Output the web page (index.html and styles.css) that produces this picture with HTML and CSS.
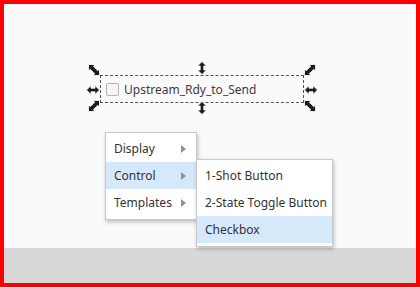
FILE: index.html
```html
<!DOCTYPE html>
<html lang="en">
<head>
    <meta charset="UTF-8">
    <title>Designer</title>
    <link rel="stylesheet" href="styles.css">
</head>
<body>
    <div class="frame">
        <div class="canvas">
            <!-- selected component -->
            <div class="selection">
                <span class="check"></span>
                <span class="label">Upstream_Rdy_to_Send</span>
            </div>

            <svg class="handle h-nw" width="12" height="12" viewBox="0 0 12 12"><path class="arr" d="M.5 .5H7L5.3 2.2l4.5 4.5L11.5 5v6.5H5l1.7-1.7-4.5-4.5L.5 7z"/></svg>
            <svg class="handle h-ne" width="12" height="12" viewBox="0 0 12 12"><path class="arr" d="M11.5 .5H5l1.7 1.7-4.5 4.5L.5 5v6.5H7L5.3 9.8l4.5-4.5L11.5 7z"/></svg>
            <svg class="handle h-sw" width="12" height="12" viewBox="0 0 12 12"><path class="arr" d="M11.5 .5H5l1.7 1.7-4.5 4.5L.5 5v6.5H7L5.3 9.8l4.5-4.5L11.5 7z"/></svg>
            <svg class="handle h-se" width="12" height="12" viewBox="0 0 12 12"><path class="arr" d="M.5 .5H7L5.3 2.2l4.5 4.5L11.5 5v6.5H5l1.7-1.7-4.5-4.5L.5 7z"/></svg>
            <svg class="handle h-n" width="10" height="14" viewBox="0 0 10 14"><path class="arr" d="M5 .5L9.5 5H6.8v4h2.7L5 13.5.5 9h2.7V5H.5z"/></svg>
            <svg class="handle h-s" width="10" height="14" viewBox="0 0 10 14"><path class="arr" d="M5 .5L9.5 5H6.8v4h2.7L5 13.5.5 9h2.7V5H.5z"/></svg>
            <svg class="handle h-w" width="14" height="10" viewBox="0 0 14 10"><path class="arr" d="M.5 5L5 .5v2.7h4V.5L13.5 5 9 9.5V6.8H5v2.7z"/></svg>
            <svg class="handle h-e" width="14" height="10" viewBox="0 0 14 10"><path class="arr" d="M.5 5L5 .5v2.7h4V.5L13.5 5 9 9.5V6.8H5v2.7z"/></svg>

            <!-- context menu -->
            <ul class="menu main-menu">
                <li>Display <span class="arrow"></span></li>
                <li class="active">Control <span class="arrow"></span></li>
                <li>Templates <span class="arrow"></span></li>
            </ul>
            <ul class="menu sub-menu">
                <li>1-Shot Button</li>
                <li>2-State Toggle Button</li>
                <li class="active">Checkbox</li>
            </ul>
        </div>
        <div class="footer"></div>
    </div>
</body>
</html>
```
FILE: styles.css
```css
body {
    margin: 0;
    font-family: "Noto Sans", "Open Sans", sans-serif;
}

.frame {
    width: 420px;
    height: 287px;
    box-sizing: border-box;
    border: 4px solid #ff0000;
    display: flex;
    flex-direction: column;
}

.canvas {
    flex: 1;
    background-color: #fafafa;
    position: relative;
}

.footer {
    height: 35px;
    background-color: #d8d8d8;
}

.selection {
    position: absolute;
    left: 96px;
    top: 71px;
    width: 204px;
    height: 28px;
    box-sizing: border-box;
    border: 1px dashed #555;
    display: flex;
    align-items: center;
    gap: 5px;
    padding-left: 5px;
}

.check {
    width: 13px;
    height: 13px;
    box-sizing: border-box;
    border: 1px solid #b5b5b5;
    border-radius: 2px;
    background-color: #f6f6f6;
}

.label {
    font-size: 12px;
    color: #3d3d4a;
}

.handle {
    position: absolute;
    display: block;
}

.arr {
    fill: #1e1e1e;
    stroke: #fff;
    stroke-width: 0.8;
    stroke-linejoin: round;
}

.h-nw { left: 84px; top: 60px; }
.h-ne { left: 300px; top: 60px; }
.h-sw { left: 84px; top: 96px; }
.h-se { left: 300px; top: 96px; }
.h-n { left: 193px; top: 57px; }
.h-s { left: 193px; top: 97px; }
.h-w { left: 82px; top: 81px; }
.h-e { left: 300px; top: 81px; }

.menu {
    position: absolute;
    margin: 0;
    padding: 2px 0 3px;
    list-style: none;
    background-color: #fff;
    border: 1px solid #c8c8c8;
    box-shadow: 1px 2px 4px rgba(0, 0, 0, 0.25);
    font-size: 12px;
    color: #333;
}

.menu li {
    height: 27px;
    display: flex;
    align-items: center;
    justify-content: space-between;
    padding: 0 10px 0 8px;
    white-space: nowrap;
}

.menu li.active {
    background-color: #d5e9fb;
}

.main-menu {
    left: 101px;
    top: 128px;
    width: 90px;
}

.sub-menu {
    left: 192px;
    top: 155px;
    width: 135px;
}

.sub-menu li {
    padding: 0 5px 0 8px;
}

.arrow {
    width: 0;
    height: 0;
    border-top: 4px solid transparent;
    border-bottom: 4px solid transparent;
    border-left: 5px solid #8196ab;
}
```
